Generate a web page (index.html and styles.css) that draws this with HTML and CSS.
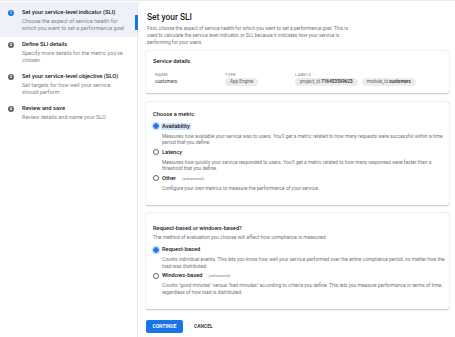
FILE: index.html
```html
<!DOCTYPE html>
<html>
<head>
<meta charset="utf-8">
<link rel="stylesheet" href="styles.css">
</head>
<body>
<div class="app">
  <aside class="steps">
    <div class="step active">
      <span class="num">1</span>
      <div class="step-text">
        <div class="step-title">Set your service-level indicator (SLI)</div>
        <div class="step-desc">Choose the aspect of service health for which you want to set a performance goal</div>
      </div>
    </div>
    <div class="step">
      <span class="num">2</span>
      <div class="step-text">
        <div class="step-title">Define SLI details</div>
        <div class="step-desc">Specify more details for the metric you've chosen</div>
      </div>
    </div>
    <div class="step">
      <span class="num">3</span>
      <div class="step-text">
        <div class="step-title">Set your service-level objective (SLO)</div>
        <div class="step-desc">Set targets for how well your service should perform</div>
      </div>
    </div>
    <div class="step">
      <span class="num">4</span>
      <div class="step-text">
        <div class="step-title">Review and save</div>
        <div class="step-desc">Review details and name your SLO</div>
      </div>
    </div>
  </aside>
  <main class="main">
    <h1 class="title">Set your SLI</h1>
    <p class="intro">First, choose the aspect of service health for which you want to set a performance goal. This is used to calculate the service level indicator, or SLI, because it indicates how your service is performing for your users.</p>

    <section class="card details">
      <div class="card-title">Service details</div>
      <div class="cols">
        <div class="col col-name">
          <div class="lbl">NAME</div>
          <div class="val">customers</div>
        </div>
        <div class="col col-type">
          <div class="lbl">TYPE</div>
          <div class="val"><span class="chip">App Engine</span></div>
        </div>
        <div class="col col-labels">
          <div class="lbl">LABELS</div>
          <div class="val"><span class="chip">project_id <b>716453599623</b></span><span class="chip">module_id <b>customers</b></span></div>
        </div>
      </div>
    </section>

    <section class="card metric">
      <div class="card-title">Choose a metric</div>
      <div class="option first">
        <div class="opt-head"><span class="radio on"></span><span class="opt-label sel">Availability</span></div>
        <div class="opt-desc">Measures how available your service was to users. You'll get a metric related to how many requests were successful within a time period that you define.</div>
      </div>
      <div class="option">
        <div class="opt-head"><span class="radio"></span><span class="opt-label">Latency</span></div>
        <div class="opt-desc">Measures how quickly your service responded to users. You'll get a metric related to how many responses were faster than a threshold that you define.</div>
      </div>
      <div class="option">
        <div class="opt-head"><span class="radio"></span><span class="opt-label">Other</span><span class="adv">(advanced)</span></div>
        <div class="opt-desc">Configure your own metrics to measure the performance of your service.</div>
      </div>
    </section>

    <section class="card method">
      <div class="card-title">Request-based or windows-based?</div>
      <div class="sub">The method of evaluation you choose will affect how compliance is measured</div>
      <div class="option first">
        <div class="opt-head"><span class="radio on"></span><span class="opt-label">Request-based</span></div>
        <div class="opt-desc">Counts individual events. This lets you know how well your service performed over the entire compliance period, no matter how the load was distributed.</div>
      </div>
      <div class="option">
        <div class="opt-head"><span class="radio"></span><span class="opt-label">Windows-based</span><span class="adv">(advanced)</span></div>
        <div class="opt-desc">Counts "good minutes" versus "bad minutes" according to criteria you define. This lets you measure performance in terms of time, regardless of how load is distributed.</div>
      </div>
    </section>

    <div class="actions">
      <button class="btn primary">CONTINUE</button>
      <button class="btn text">CANCEL</button>
    </div>
  </main>
</div>
</body>
</html>
```
FILE: styles.css
```css
* { box-sizing: border-box; }
html, body { margin: 0; padding: 0; background: #fff; }
body { font-family: Roboto, "Liberation Sans", Arial, sans-serif; color: #202124; width: 455px; height: 337px; overflow: hidden; border-top: 1px solid #ebebeb; }
.app { display: flex; height: 336px; }

.steps { width: 138px; flex: none; border-right: 1px solid #e8e8e8; padding-top: 1px; }
.step { display: flex; gap: 8px; padding: 3px 4px 5.5px 8px; position: relative; }
.step.active { background: #eef1f9; padding-top: 6px; }
.step.active::after { content: ""; position: absolute; right: -1px; top: 13px; width: 3px; height: 15px; background: #1a73e8; }
.num { flex: none; width: 6px; height: 6px; border-radius: 50%; background: #5f6368; color: #fff; font-size: 4px; line-height: 6px; text-align: center; font-weight: 700; margin-top: 1.5px; }
.step.active .num { background: #1a73e8; }
.step-text { width: 104px; }
.step-title { font-size: 5.8px; line-height: 8px; font-weight: 500; color: #202124; white-space: nowrap; }
.step-desc { font-size: 5.5px; line-height: 7px; color: #80868b; margin-top: 1.5px; }

.main { flex: 1; padding: 10px 6px 0 8px; }
.title { font-size: 8.4px; font-weight: 500; margin: 0 0 1.5px 1px; line-height: 12px; }
.intro { font-size: 4.8px; line-height: 7px; color: #70757a; margin: 0 0 5.5px 1px; width: 204px; }

.card { border-radius: 2px; box-shadow: 0 0.5px 1.5px rgba(60,64,67,0.3), 0 0 1px rgba(60,64,67,0.15); padding: 6.5px 3px 7px 7px; }
.card-title { font-size: 5.7px; line-height: 7px; font-weight: 500; color: #202124; }
.cols { display: flex; margin-top: 7.5px; padding-left: 2px; }
.col-name { width: 70px; }
.col-type { width: 70px; }
.lbl { font-size: 4.4px; line-height: 6px; color: #80868b; letter-spacing: 0.1px; }
.val { font-size: 4.7px; line-height: 8px; color: #3c4043; display: flex; gap: 4px; align-items: center; }
.chip { background: #ececec; border-radius: 4px; padding: 0 5px; font-size: 4.6px; line-height: 8px; color: #5f6368; }
.chip b { color: #3c4043; font-weight: 700; }
.details { margin-bottom: 9px; }

.metric { padding-top: 8.5px; padding-bottom: 13.5px; margin-bottom: 8.5px; }
.method { padding-top: 12px; padding-bottom: 13.5px; }
.sub { font-size: 5px; line-height: 7px; color: #70757a; margin-top: 2px; }
.option { margin-top: 2.5px; }
.option.first { margin-top: 4.5px; }
.opt-head { display: flex; align-items: center; gap: 3px; height: 8px; }
.radio { width: 6px; height: 6px; border-radius: 50%; border: 0.8px solid #5f6368; flex: none; }
.radio.on { border-color: #1a73e8; background: radial-gradient(circle, #1a73e8 0 1.6px, #fff 1.9px); box-shadow: 0 0 0 1.5px #d2e3fc; }
.opt-label { font-size: 5.7px; font-weight: 500; color: #202124; line-height: 7px; }
.opt-label.sel { background: #d2e3fc; padding: 0 1px; margin-left: -1px; }
.adv { font-size: 4.4px; color: #80868b; margin-left: 3px; }
.opt-desc { font-size: 4.9px; line-height: 6.5px; color: #70757a; padding-left: 9px; margin-top: 2.5px; }

.actions { display: flex; gap: 11px; align-items: center; margin-top: 11px; }
.btn { font-family: inherit; font-size: 4.8px; font-weight: 700; border: none; border-radius: 2px; cursor: pointer; letter-spacing: 0.1px; }
.btn.primary { background: #1a73e8; color: #fff; width: 37px; height: 13px; padding: 0; }
.btn.text { background: transparent; color: #3c4043; padding: 0; }
```
